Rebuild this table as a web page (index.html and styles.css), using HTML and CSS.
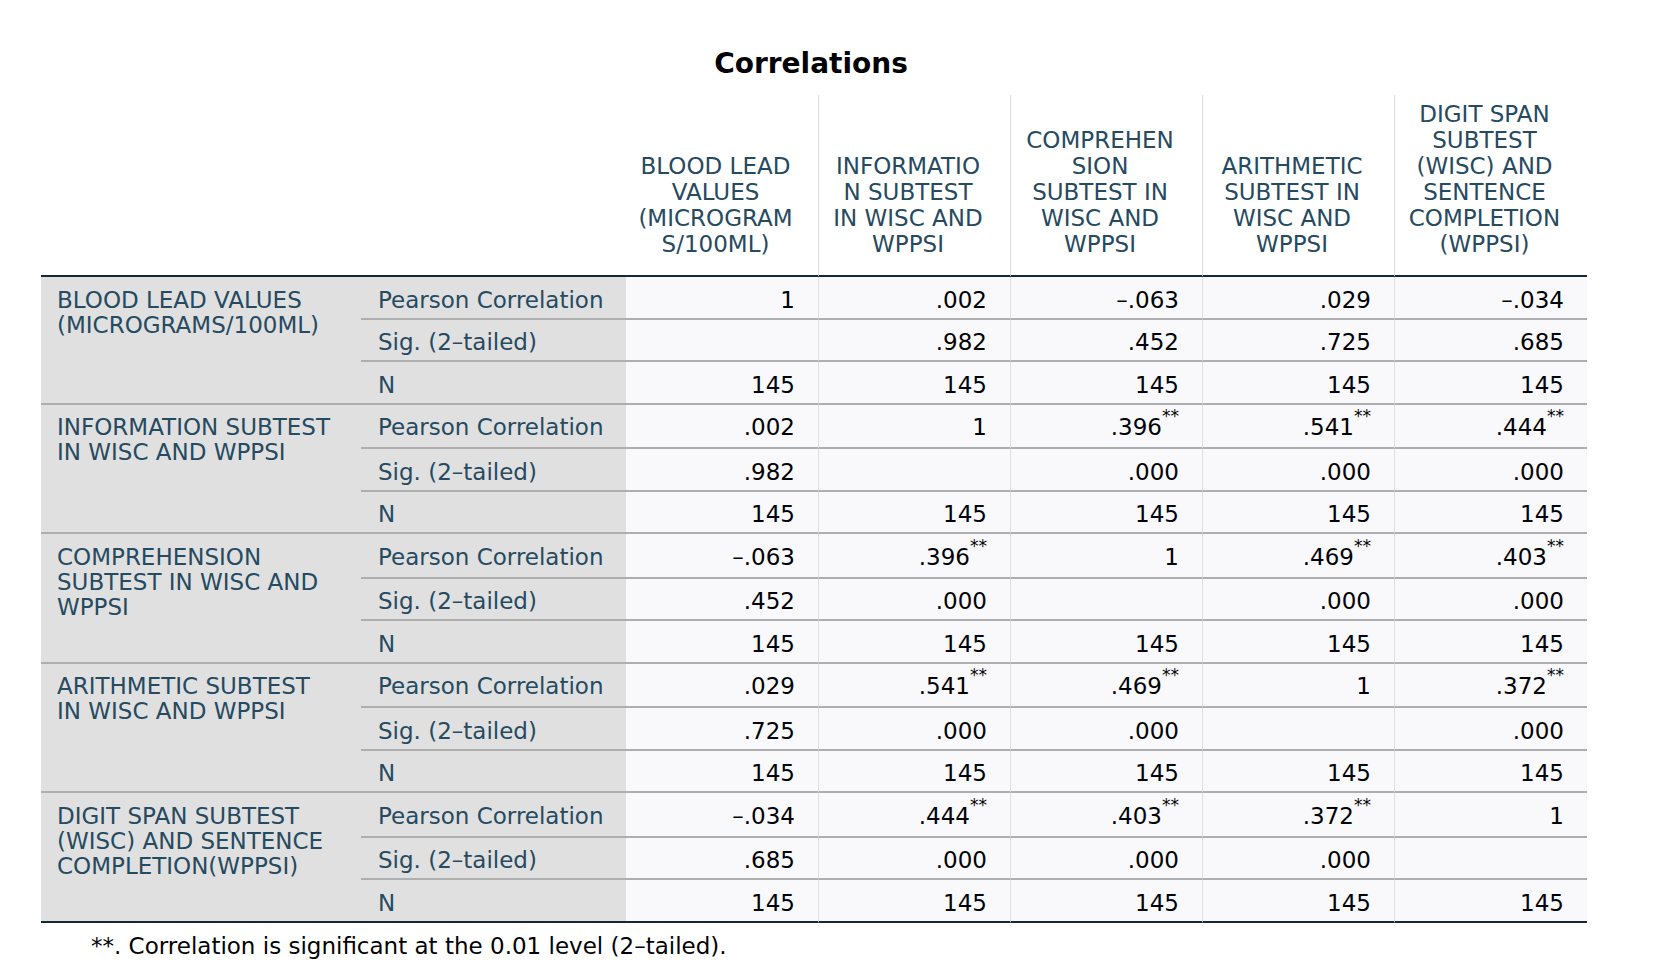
FILE: index.html
```html
<!DOCTYPE html>
<html lang="en">
<head>
<meta charset="utf-8">
<title>Correlations</title>
<link rel="stylesheet" href="styles.css">
</head>
<body>
<div class="output">
  <h1 class="title">Correlations</h1>
  <div class="grid" role="table">
    <div class="row" role="row">
      <div class="hcorner"></div>
      <div class="hcell" role="columnheader"><span>BLOOD LEAD<br>VALUES<br>(MICROGRAM<br>S/100ML)</span></div>
      <div class="hcell" role="columnheader"><span>INFORMATIO<br>N SUBTEST<br>IN WISC AND<br>WPPSI</span></div>
      <div class="hcell" role="columnheader"><span>COMPREHEN<br>SION<br>SUBTEST IN<br>WISC AND<br>WPPSI</span></div>
      <div class="hcell" role="columnheader"><span>ARITHMETIC<br>SUBTEST IN<br>WISC AND<br>WPPSI</span></div>
      <div class="hcell" role="columnheader"><span>DIGIT SPAN<br>SUBTEST<br>(WISC) AND<br>SENTENCE<br>COMPLETION<br>(WPPSI)</span></div>
    </div>

    <!-- Group 1 -->
    <div class="row" role="row">
      <div class="group" role="rowheader">BLOOD LEAD VALUES<br>(MICROGRAMS/100ML)</div>
      <div class="stat">Pearson Correlation</div>
      <div class="val">1</div>
      <div class="val">.002</div>
      <div class="val">–.063</div>
      <div class="val">.029</div>
      <div class="val">–.034</div>
    </div>
    <div class="row" role="row">
      <div class="stat">Sig. (2–tailed)</div>
      <div class="val"></div>
      <div class="val">.982</div>
      <div class="val">.452</div>
      <div class="val">.725</div>
      <div class="val">.685</div>
    </div>
    <div class="row" role="row">
      <div class="stat">N</div>
      <div class="val">145</div>
      <div class="val">145</div>
      <div class="val">145</div>
      <div class="val">145</div>
      <div class="val">145</div>
    </div>

    <!-- Group 2 -->
    <div class="row tall" role="row">
      <div class="group" role="rowheader">INFORMATION SUBTEST<br>IN WISC AND WPPSI</div>
      <div class="stat">Pearson Correlation</div>
      <div class="val">.002</div>
      <div class="val">1</div>
      <div class="val">.396<sup class="sig">**</sup></div>
      <div class="val">.541<sup class="sig">**</sup></div>
      <div class="val">.444<sup class="sig">**</sup></div>
    </div>
    <div class="row" role="row">
      <div class="stat">Sig. (2–tailed)</div>
      <div class="val">.982</div>
      <div class="val"></div>
      <div class="val">.000</div>
      <div class="val">.000</div>
      <div class="val">.000</div>
    </div>
    <div class="row" role="row">
      <div class="stat">N</div>
      <div class="val">145</div>
      <div class="val">145</div>
      <div class="val">145</div>
      <div class="val">145</div>
      <div class="val">145</div>
    </div>

    <!-- Group 3 -->
    <div class="row tall" role="row">
      <div class="group" role="rowheader">COMPREHENSION<br>SUBTEST IN WISC AND<br>WPPSI</div>
      <div class="stat">Pearson Correlation</div>
      <div class="val">–.063</div>
      <div class="val">.396<sup class="sig">**</sup></div>
      <div class="val">1</div>
      <div class="val">.469<sup class="sig">**</sup></div>
      <div class="val">.403<sup class="sig">**</sup></div>
    </div>
    <div class="row" role="row">
      <div class="stat">Sig. (2–tailed)</div>
      <div class="val">.452</div>
      <div class="val">.000</div>
      <div class="val"></div>
      <div class="val">.000</div>
      <div class="val">.000</div>
    </div>
    <div class="row" role="row">
      <div class="stat">N</div>
      <div class="val">145</div>
      <div class="val">145</div>
      <div class="val">145</div>
      <div class="val">145</div>
      <div class="val">145</div>
    </div>

    <!-- Group 4 -->
    <div class="row tall" role="row">
      <div class="group" role="rowheader">ARITHMETIC SUBTEST<br>IN WISC AND WPPSI</div>
      <div class="stat">Pearson Correlation</div>
      <div class="val">.029</div>
      <div class="val">.541<sup class="sig">**</sup></div>
      <div class="val">.469<sup class="sig">**</sup></div>
      <div class="val">1</div>
      <div class="val">.372<sup class="sig">**</sup></div>
    </div>
    <div class="row" role="row">
      <div class="stat">Sig. (2–tailed)</div>
      <div class="val">.725</div>
      <div class="val">.000</div>
      <div class="val">.000</div>
      <div class="val"></div>
      <div class="val">.000</div>
    </div>
    <div class="row" role="row">
      <div class="stat">N</div>
      <div class="val">145</div>
      <div class="val">145</div>
      <div class="val">145</div>
      <div class="val">145</div>
      <div class="val">145</div>
    </div>

    <!-- Group 5 -->
    <div class="row tall" role="row">
      <div class="group group-last" role="rowheader">DIGIT SPAN SUBTEST<br>(WISC) AND SENTENCE<br>COMPLETION(WPPSI)</div>
      <div class="stat">Pearson Correlation</div>
      <div class="val">–.034</div>
      <div class="val">.444<sup class="sig">**</sup></div>
      <div class="val">.403<sup class="sig">**</sup></div>
      <div class="val">.372<sup class="sig">**</sup></div>
      <div class="val">1</div>
    </div>
    <div class="row" role="row">
      <div class="stat">Sig. (2–tailed)</div>
      <div class="val">.685</div>
      <div class="val">.000</div>
      <div class="val">.000</div>
      <div class="val">.000</div>
      <div class="val"></div>
    </div>
    <div class="row last" role="row">
      <div class="stat">N</div>
      <div class="val">145</div>
      <div class="val">145</div>
      <div class="val">145</div>
      <div class="val">145</div>
      <div class="val">145</div>
    </div>
  </div>
  <p class="footnote">**. Correlation is significant at the 0.01 level (2–tailed).</p>
</div>
</body>
</html>
```

FILE: styles.css
```css
* {
  box-sizing: border-box;
}

body {
  margin: 0;
  background: #ffffff;
  font-family: "DejaVu Sans", "Noto Sans", sans-serif;
}

.output {
  width: 1587px;
  padding: 47px 0 0 41px;
}

.title {
  margin: 0;
  padding: 0 6px 14px 0;
  font-family: "DejaVu Sans", sans-serif;
  font-weight: 700;
  font-size: 28px;
  line-height: 34px;
  color: #010205;
  text-align: center;
}

.grid {
  display: grid;
  grid-template-columns: 320px 265px 192px 192px 192px 192px 193px;
  font-size: 23px;
  line-height: 25px;
}

.row {
  display: contents;
}

.hcorner {
  grid-column: span 2;
  border-bottom: 2px solid #152935;
}

.hcell {
  display: flex;
  justify-content: center;
  align-items: flex-end;
  padding: 6px 16px 18px 3px;
  line-height: 26px;
  text-align: center;
  white-space: nowrap;
  color: #264a60;
  border-bottom: 2px solid #152935;
}

.hcell + .hcell {
  border-left: 1px solid #e0e0e0;
}

.group {
  grid-row: span 3;
  padding: 10.5px 16px 8px;
  background: #e0e0e0;
  color: #264a60;
  white-space: nowrap;
  border-bottom: 2px solid #aeaeae;
}

.stat {
  padding: 10.5px 16px 5px 17px;
  background: #e0e0e0;
  color: #264a60;
  white-space: nowrap;
  border-bottom: 2px solid #aeaeae;
}

.val {
  padding: 10.5px 23px 5px 8px;
  background: #f9f9fb;
  color: #010205;
  text-align: right;
  white-space: nowrap;
  border-bottom: 2px solid #aeaeae;
}

.val + .val {
  border-left: 1px solid #e0e0e0;
}

.tall > .stat,
.tall > .val {
  padding-bottom: 7px;
}

.last > .stat,
.last > .val,
.group-last {
  border-bottom-color: #152935;
}

.sig {
  font-size: 17px;
  line-height: 0;
  vertical-align: 13px;
}

.footnote {
  margin: 0;
  padding: 10px 0 0 50px;
  font-size: 23px;
  line-height: 26px;
  color: #010205;
}
```
